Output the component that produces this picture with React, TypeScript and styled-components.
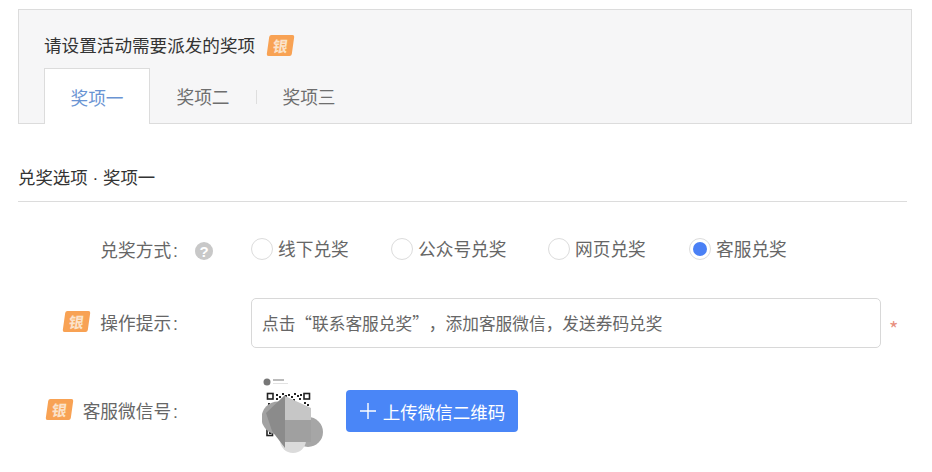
import React from 'react'
import styled, {createGlobalStyle} from 'styled-components'

const GlobalStyle = createGlobalStyle`
  html, body {
    margin: 0;
    background: #fff;
    font-family: "Noto Sans CJK SC", "Liberation Sans", sans-serif;
    font-weight: 400;
    color: #555;
  }
  * { box-sizing: border-box; }
`

const Page = styled.div`
  width: 932px;
  height: 472px;
  overflow: hidden;
  padding: 9px 20px 0 18px;
`

const Panel = styled.section`
  width: 894px;
  height: 115px;
  margin-right: -5px;
  background: #f6f6f7;
  border: 1px solid #dcdcdc;
  padding: 22px 0 0 25px;
`

const PanelTitle = styled.h2`
  display: flex;
  align-items: center;
  gap: 13px;
  height: 26px;
  margin: 0;
  font-size: 17.6px;
  line-height: 26px;
  font-weight: 400;
  color: #333;
`

const Badge = styled.span`
  display: inline-flex;
  flex: none;
  align-items: center;
  justify-content: center;
  width: 25px;
  height: 21px;
  border-radius: 2px;
  background: #f8a254;
  color: #fbe3cb;
  font-size: 15px;
  font-weight: 700;
  line-height: 21px;
  transform: skewX(-8deg);
`

const Tabs = styled.div`
  display: flex;
  margin-top: 10px;
  height: 56px;
`

const Tab = styled.div<{$active?: boolean; $divider?: boolean}>`
  position: relative;
  width: 106px;
  height: 56px;
  display: flex;
  align-items: center;
  justify-content: center;
  font-size: 17.7px;
  color: ${(props) => (props.$active ? '#6a94d3' : '#6e6e6e')};
  background: ${(props) => (props.$active ? '#fff' : 'transparent')};
  border: ${(props) => (props.$active ? '1px solid #dcdcdc' : 'none')};
  border-bottom: none;

  ${(props) =>
    props.$divider &&
    `&::before {
      content: '';
      position: absolute;
      left: 0;
      top: 22px;
      width: 1px;
      height: 14px;
      background: #dedede;
    }`}
`

const SectionTitle = styled.h3`
  width: 889px;
  height: 78px;
  margin: 0;
  border-bottom: 1px solid #dcdcdc;
  padding-top: 40px;
  font-size: 17.4px;
  line-height: 26px;
  font-weight: 400;
  color: #333;
`

const Dot = styled.span`
  font-family: "Liberation Sans", sans-serif;
`

const Row = styled.div<{$height: number; $top: number}>`
  display: flex;
  align-items: center;
  height: ${(props) => props.$height}px;
  margin-top: ${(props) => props.$top}px;
`

const Label = styled.div<{$lift?: number}>`
  display: flex;
  flex: none;
  align-items: center;
  justify-content: flex-end;
  gap: 11px;
  width: 160px;
  padding-bottom: ${(props) => props.$lift || 0}px;
  font-size: 17.7px;
  color: #666;
`

const Colon = styled.span`
  font-family: "Liberation Sans", sans-serif;
  margin-left: 2px;
`

const Help = styled.span`
  display: inline-flex;
  flex: none;
  align-items: center;
  justify-content: center;
  width: 18px;
  height: 18px;
  margin: 4px 0 0 17px;
  border-radius: 50%;
  background: #c8c8c8;
  color: #fff;
  font-family: "Liberation Sans", sans-serif;
  font-size: 15px;
  font-weight: 700;
`

const RadioGroup = styled.div`
  display: flex;
  align-items: center;
  margin-left: 38px;
`

const RadioItem = styled.label<{$width: number}>`
  display: flex;
  align-items: center;
  gap: 5px;
  width: ${(props) => props.$width}px;
  font-size: 17.7px;
  color: #666;
`

const RadioText = styled.span`
  padding-bottom: 2px;
`

const RadioCircle = styled.span<{$checked?: boolean}>`
  display: flex;
  flex: none;
  align-items: center;
  justify-content: center;
  width: 22px;
  height: 22px;
  border-radius: 50%;
  background: #fff;
  border: 1px solid #dcdcdc;

  ${(props) =>
    props.$checked &&
    `&::after {
      content: '';
      width: 14px;
      height: 14px;
      border-radius: 50%;
      background: #4a80f5;
    }`}
`

const Field = styled.div`
  flex: none;
  width: 630px;
  height: 50px;
  margin-left: 73px;
  padding-left: 10px;
  border: 1px solid #d8d8d8;
  border-radius: 5px;
  font-size: 16.7px;
  line-height: 48px;
  text-spacing-trim: space-all;
  color: #666;
`

const Required = styled.span`
  margin: 11px 0 0 8px;
  font-size: 20px;
  line-height: 24px;
  color: #e8907f;
`

const QrBox = styled.div`
  flex: none;
  width: 64px;
  height: 82px;
  margin-left: 84px;
`

const UploadButton = styled.button`
  display: flex;
  align-items: center;
  justify-content: center;
  gap: 6px;
  width: 172px;
  height: 42px;
  margin-left: 20px;
  padding: 0;
  border: none;
  border-radius: 4px;
  background: #4a86f7;
  color: #fff;
  font-family: inherit;
  font-size: 17.5px;
`

// dark modules of the qr code, in page coordinates
const qrCells: [number, number][] = [
  [276, 394], [279, 396], [282, 393], [285, 395], [288, 394], [291, 396], [294, 393],
  [297, 395], [300, 394], [276, 398], [281, 399], [287, 399], [293, 399], [299, 398],
  [304, 402], [307, 404], [305, 407], [308, 409], [268, 403], [271, 405]
]

const QrCode = () => (
  <svg width="64" height="84" viewBox="262 370 64 84" style={{display: 'block'}}>
    <circle cx="267" cy="382" r="3.5" fill="#777" />
    <rect x="273" y="379" width="11" height="2" fill="#bbb" />
    <rect x="273" y="383" width="15" height="1" fill="#e2e2e2" />
    <g fill="none" stroke="#222" strokeWidth="1.6">
      <rect x="267.5" y="393.5" width="5.5" height="5.5" />
      <rect x="304" y="393.5" width="5.5" height="5.5" />
      <rect x="267" y="430" width="5.5" height="5.5" />
    </g>
    <rect x="269" y="431.5" width="2.5" height="2.5" fill="#222" />
    <g fill="#222">
      {qrCells.map(([x, y]) => (
        <rect key={`${x}-${y}`} x={x} y={y} width="2" height="2" />
      ))}
    </g>
    <circle cx="278" cy="418" r="16.5" fill="#a2a2a2" />
    <circle cx="308" cy="432" r="15" fill="#a6a6a6" />
    <circle cx="293" cy="440" r="13" fill="#dbdbdb" />
    <path d="M285 396 L311 408 V420 H285 Z" fill="#c6c6c6" />
    <rect x="285" y="420" width="26" height="22" fill="#a0a0a0" />
    <path d="M285 395 L266 413 L272 431 L285 448 Z" fill="#8b8b8b" />
  </svg>
)

const App = () => {
  return (
    <Page>
      <GlobalStyle />
      <Panel>
        <PanelTitle>
          请设置活动需要派发的奖项
          <Badge>银</Badge>
        </PanelTitle>
        <Tabs>
          <Tab $active>奖项一</Tab>
          <Tab>奖项二</Tab>
          <Tab $divider>奖项三</Tab>
        </Tabs>
      </Panel>

      <SectionTitle>
        兑奖选项<Dot> · </Dot>奖项一
      </SectionTitle>

      <Row $height={26} $top={34}>
        <Label>
          <span>
            兑奖方式<Colon>:</Colon>
          </span>
        </Label>
        <Help>?</Help>
        <RadioGroup>
          <RadioItem $width={140}>
            <RadioCircle />
            <RadioText>线下兑奖</RadioText>
          </RadioItem>
          <RadioItem $width={157}>
            <RadioCircle />
            <RadioText>公众号兑奖</RadioText>
          </RadioItem>
          <RadioItem $width={141}>
            <RadioCircle />
            <RadioText>网页兑奖</RadioText>
          </RadioItem>
          <RadioItem $width={120}>
            <RadioCircle $checked />
            <RadioText>客服兑奖</RadioText>
          </RadioItem>
        </RadioGroup>
      </Row>

      <Row $height={50} $top={36}>
        <Label $lift={3}>
          <Badge>银</Badge>
          <span>
            操作提示<Colon>:</Colon>
          </span>
        </Label>
        <Field>点击“联系客服兑奖”，添加客服微信，发送券码兑奖</Field>
        <Required>*</Required>
      </Row>

      <Row $height={82} $top={22}>
        <Label $lift={3}>
          <Badge>银</Badge>
          <span>
            客服微信号<Colon>:</Colon>
          </span>
        </Label>
        <QrBox>
          <QrCode />
        </QrBox>
        <UploadButton>
          <svg width="18" height="18" viewBox="0 0 18 18">
            <path d="M9 1V17M1 9H17" stroke="#fff" strokeWidth="1.4" fill="none" />
          </svg>
          上传微信二维码
        </UploadButton>
      </Row>
    </Page>
  )
}

export default App
